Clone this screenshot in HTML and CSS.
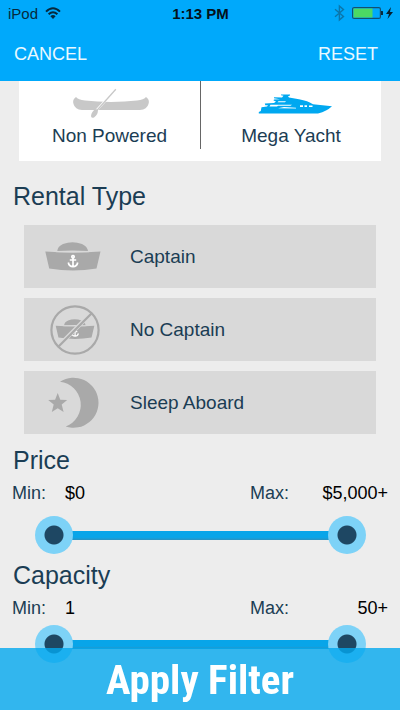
FILE: index.html
```
<!DOCTYPE html>
<html lang="en">
<head>
<meta charset="utf-8">
<meta name="viewport" content="width=device-width, initial-scale=1">
<title>Filter</title>
<link rel="stylesheet" href="styles.css">
</head>
<body>
<header class="top">
  <div class="status">
    <div class="status-left">
      <span>iPod</span>
      <svg width="16" height="12" viewBox="0 0 16 12" aria-hidden="true"><g fill="none" stroke="#06293d" stroke-width="2"><path d="M1 4.6Q8-2.2 15 4.6"/><path d="M3.6 7.3Q8 3.2 12.4 7.3"/></g><path fill="#06293d" d="M5.4 9.2Q8 7 10.6 9.2L8 12Z"/></svg>
    </div>
    <strong>1:13 PM</strong>
    <div class="status-right">
      <svg width="11" height="16" viewBox="0 0 11 16" aria-hidden="true"><path d="M1 4.2L9.5 11.4L5.4 15V1L9.5 4.6L1 11.8" fill="none" stroke="#0b76ab" stroke-width="1.4"/></svg>
      <svg width="41" height="14" viewBox="0 0 41 14" aria-hidden="true"><rect x=".6" y="1.6" width="27.8" height="10.8" rx="1.5" fill="none" stroke="#14506f" stroke-width="1.2"/><rect x="1.5" y="2.5" width="19" height="9" fill="#4cd964"/><path d="M29 5h1.5q.5 0 .5 .5v3q0 .5-.5.5H29z" fill="#06293d"/><path d="M39 1L34 8h3l-1.5 5L41 6h-3z" fill="#06202f"/></svg>
    </div>
  </div>
  <nav class="actions">
    <button type="button">CANCEL</button>
    <button type="button">RESET</button>
  </nav>
</header>

<main>
  <section class="tiles" aria-label="Boat type">
    <button type="button" class="tile">
      <svg width="76" height="32" viewBox="-1 0 76 32" aria-hidden="true"><path fill="#c8c8c8" d="M3 11Q5 13.5 12 14.6Q24 16 38 16T64 14.6Q71 13.5 73 11Q77 13.5 75.5 18Q74 23.5 67 24H9Q2 23.5.5 18Q-1 13.5 3 11Z"/><path d="M42.8 3.3L22 26" stroke="#fff" stroke-width="2.4"/><path d="M42.8 3.3L22.5 26" stroke="#c8c8c8" stroke-width="1.3"/><path fill="#c8c8c8" d="M24.8 24.3Q25.5 28 21 31.5Q18 32.5 18 30Q18.5 25.5 22.8 22.8Z"/></svg>
      <span>Non Powered</span>
    </button>
    <button type="button" class="tile" aria-pressed="true">
      <svg width="76" height="32" viewBox="-5 0 76 32" aria-hidden="true"><path fill="#00a8f0" d="M.8 27.5V26L2.8 25L3.5 21.2L9 20.6L10 19.2H7.3L6.8 17.6L16 17L18 15.6L15.5 14.6L16 13.4L22 13.2L16 12.2V11.2L24 11.4L25.5 9.8L23 9.2V8.6H32V9.6L30 10.2L31 11.6L41 13.2Q50 14.8 55 18.3L74 20.2Q69 25 60 27.5Z"/><g fill="#fff"><path d="M12.500 18.800H34L32.500 19.800H20L19 20.600H11.500ZM20.500 15.300H28L27 16.200H19.500Z"/><path d="M26 21L38 21.800V22.400L20 22.200Z"/><path d="M42 19.300h3v1.800h-3zM46.500 19.300h2.500v1.800h-2.500zM51 19.500h3.500v1.600H51z"/></g></svg>
      <span>Mega Yacht</span>
    </button>
  </section>

  <h2>Rental Type</h2>
  <section class="rentals" aria-label="Rental Type">
    <button type="button" class="rental">
      <svg width="56" height="30" viewBox="0 0 56 30" aria-hidden="true"><use href="#sailor-cap"/></svg>
      <span>Captain</span>
    </button>
    <button type="button" class="rental">
      <svg width="50" height="50" viewBox="-2 0 50 50" aria-hidden="true"><g transform="translate(5.5 14) scale(.7)"><use href="#sailor-cap"/></g><path d="M41 8.5L8.5 41" stroke="#d9d9d9" stroke-width="4"/><g fill="none" stroke="#a9a9a9" stroke-width="2.2"><circle cx="25" cy="25" r="23.6"/><path d="M41.7 8.3L8.3 41.7"/></g></svg>
      <span>No Captain</span>
    </button>
    <button type="button" class="rental">
      <svg width="50" height="50" viewBox="-2 0 50 50" aria-hidden="true"><g fill="#a9a9a9"><path d="M10 3.7A25 25 0 1 1 15.700 48.500A23.200 23.200 0 0 0 10 3.700Z"/><path d="M7.700 15L10.300 21.800L17.200 22L11.700 26.600L13.600 34L7.700 30.200L1.800 34L3.700 26.600L-1.800 22L5.100 21.800Z"/></g></svg>
      <span>Sleep Aboard</span>
    </button>
  </section>

  <section class="range">
    <h2>Price</h2>
    <div class="limits">
      <p><label for="price-min">Min:</label><output for="price-min">$0</output></p>
      <p><label for="price-max">Max:</label><output for="price-max">$5,000+</output></p>
    </div>
    <div class="slider">
      <input id="price-min" type="range" min="0" max="5000" value="0">
      <input id="price-max" type="range" min="0" max="5000" value="5000">
    </div>
  </section>

  <section class="range range-compact">
    <h2>Capacity</h2>
    <div class="limits">
      <p><label for="capacity-min">Min:</label><output for="capacity-min">1</output></p>
      <p><label for="capacity-max">Max:</label><output for="capacity-max">50+</output></p>
    </div>
    <div class="slider">
      <input id="capacity-min" type="range" min="1" max="50" value="1">
      <input id="capacity-max" type="range" min="1" max="50" value="50">
    </div>
  </section>
</main>

<button type="button" class="apply">Apply Filter</button>

<svg class="defs" width="0" height="0" aria-hidden="true">
  <defs>
    <g id="sailor-cap">
      <path fill="#a9a9a9" d="M12.3 9Q12.5 4.5 18 2Q27.5-1.5 37 2Q42.5 4.5 43 9Q27.5 8 12.3 9Z"/>
      <path fill="#a9a9a9" d="M.3 9.5Q28 11.5 55.5 9.5L51.5 26.5Q28 30.5 4.2 26.5Z"/>
      <path d="M11 9.7Q28 10.3 44 9.7" fill="none" stroke="#d9d9d9"/>
      <g fill="none" stroke="#fff" stroke-width="1.7"><circle cx="28" cy="14.8" r="1.2"/><path d="M28 16V24.5M24.8 18H31.2M23.3 20.5Q24 24.5 28 24.6Q32 24.5 32.7 20.5"/></g>
    </g>
  </defs>
</svg>
</body>
</html>
```
FILE: styles.css
```
* { box-sizing: border-box; }

body {
  margin: 0;
  min-height: 100vh;
  background: #ededed;
  color: #1b3d54;
  font-family: "Liberation Sans", Arial, sans-serif;
  font-size: 19px;
}

button {
  margin: 0;
  padding: 0;
  border: 0;
  background: none;
  color: inherit;
  font: inherit;
  cursor: pointer;
}

h2, p { margin: 0; }

svg { display: block; overflow: visible; }

.defs { position: absolute; }

.top {
  background: #00a9fb;
  padding-bottom: 15px;
}

.status {
  display: grid;
  grid-template-columns: 1fr auto 1fr;
  align-items: center;
  height: 26px;
  padding: 0 7px 0 8px;
  color: #06293d;
  font-size: 15px;
}

.status strong { color: #04121b; }

.status-left, .status-right {
  display: flex;
  align-items: center;
  gap: 7px;
}

.status-right { justify-content: flex-end; }

.actions {
  display: flex;
  justify-content: space-between;
  padding: 17px 22px 0 14px;
  color: #e9f9ff;
  font-size: 18px;
  line-height: 23px;
}

.tiles {
  display: grid;
  grid-template-columns: 1fr 1fr;
  margin: 0 19px 20px;
  background: #fff;
}

.tile {
  display: flex;
  flex-direction: column;
  align-items: center;
  gap: 6px;
  padding: 5px 0 13px;
  line-height: 24px;
}

.tile + .tile {
  border-left: 1px solid;
  border-image: linear-gradient(#666 84%, #fff 84%) 1;
}

h2 {
  padding-left: 13px;
  font-size: 25px;
  font-weight: 400;
  line-height: 30px;
}

.rentals {
  display: grid;
  gap: 10px;
  margin: 14px 24px 11px;
}

.rental {
  display: grid;
  grid-template-columns: 98px 1fr;
  column-gap: 8px;
  align-items: center;
  height: 63px;
  background: #d9d9d9;
  line-height: 24px;
  text-align: left;
}

.rental svg { justify-self: center; }

.limits {
  display: flex;
  justify-content: space-between;
  margin-top: 8px;
  padding: 0 12px;
  font-size: 18px;
  line-height: 20px;
}

.limits p { display: flex; }
.limits label { width: 53px; }
.limits output { color: #000; }
.limits p:last-child { width: 138px; justify-content: space-between; }

.slider {
  display: grid;
  align-items: center;
  margin: 13px 34px 6px 35px;
  background: linear-gradient(#08a5e9 70%, #2b93c1) center / calc(100% - 38px) 9px no-repeat;
}

.range-compact .slider { margin-top: 7px; }

.slider input {
  grid-area: 1 / 1;
  appearance: none;
  width: 100%;
  height: 38px;
  margin: 0;
  background: none;
  pointer-events: none;
}

.slider input::-webkit-slider-thumb {
  appearance: none;
  width: 38px;
  height: 38px;
  border: 0;
  border-radius: 50%;
  background: radial-gradient(circle, #1e4763 9px, #7dd2f7 10px);
  pointer-events: auto;
}

.apply {
  position: fixed;
  bottom: 0;
  left: 0;
  width: 100%;
  padding: 8px 0 6px;
  background: rgba(3, 167, 238, 0.8);
  color: #fff;
  font-family: "Roboto Condensed", "Arial Narrow", Roboto, sans-serif;
  font-size: 41px;
  font-weight: 700;
  line-height: 48px;
}
```
